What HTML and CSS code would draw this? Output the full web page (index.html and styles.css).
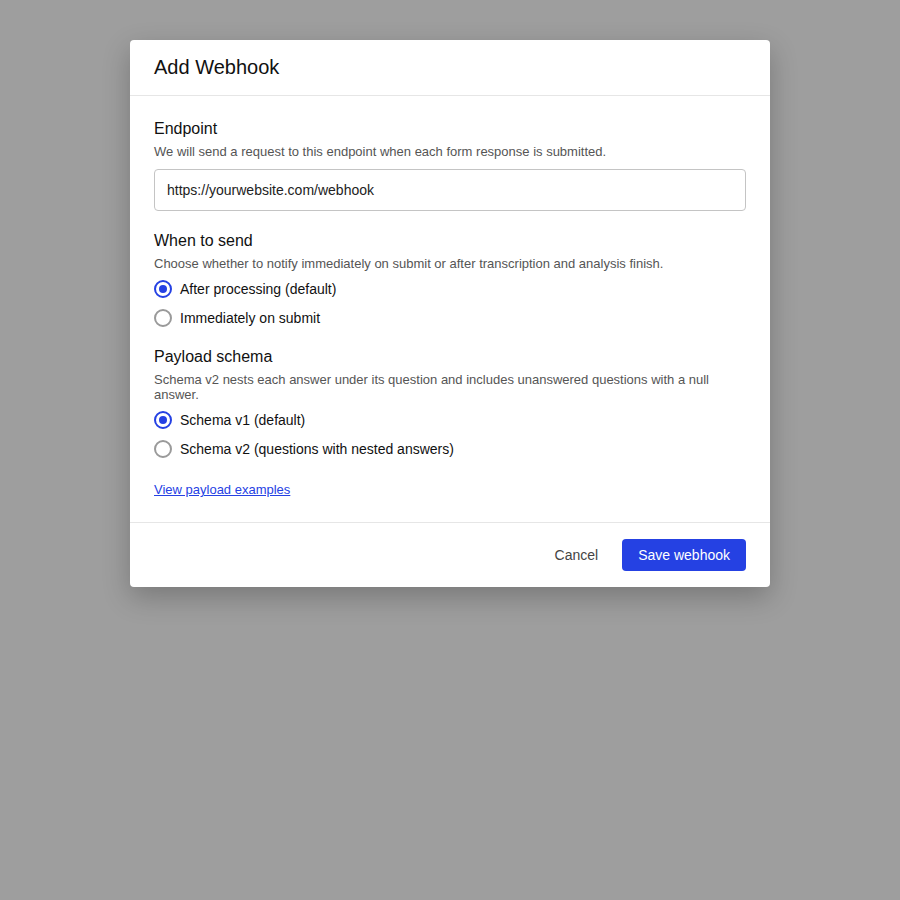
FILE: index.html
```html
<!DOCTYPE html>
<html lang="en">
<head>
    <meta charset="UTF-8">
    <meta name="viewport" content="width=device-width, initial-scale=1.0">
    <title>Add Webhook</title>
    <link rel="stylesheet" href="styles.css">
</head>
<body>
    <!-- Modal -->
    <div class="modal">
        <div class="modal-header">
            <h2>Add Webhook</h2>
        </div>

        <div class="modal-body">
            <div class="field field-endpoint">
                <div class="field-label">Endpoint</div>
                <div class="field-desc">We will send a request to this endpoint when each form response is submitted.</div>
                <input class="text-input" type="text" value="https://yourwebsite.com/webhook">
            </div>

            <div class="field">
                <div class="field-label">When to send</div>
                <div class="field-desc">Choose whether to notify immediately on submit or after transcription and analysis finish.</div>
                <div class="radio-list">
                    <label class="radio-row"><input type="radio" name="when" checked> After processing (default)</label>
                    <label class="radio-row"><input type="radio" name="when"> Immediately on submit</label>
                </div>
            </div>

            <div class="field">
                <div class="field-label">Payload schema</div>
                <div class="field-desc">Schema v2 nests each answer under its question and includes unanswered questions with a null answer.</div>
                <div class="radio-list">
                    <label class="radio-row"><input type="radio" name="schema" checked> Schema v1 (default)</label>
                    <label class="radio-row"><input type="radio" name="schema"> Schema v2 (questions with nested answers)</label>
                </div>
            </div>

            <a class="examples-link" href="#">View payload examples</a>
        </div>

        <div class="modal-footer">
            <button class="btn-cancel">Cancel</button>
            <button class="btn-save">Save webhook</button>
        </div>
    </div>
</body>
</html>
```

FILE: styles.css
```css
/* Reset */
* {
    margin: 0;
    padding: 0;
    box-sizing: border-box;
}

body {
    background-color: #9e9e9e;
    font-family: "Liberation Sans", Arial, sans-serif;
    color: #111;
    padding-top: 40px;
    height: 100vh;
}

/* Modal */
.modal {
    width: 640px;
    margin: 0 auto;
    background: #fff;
    border-radius: 4px;
    box-shadow: 0 10px 28px rgba(0, 0, 0, 0.24);
}

.modal-header {
    padding: 15px 24px 16px;
    border-bottom: 1px solid #e6e6e6;
}

.modal-header h2 {
    font-size: 20px;
    font-weight: 400;
    line-height: 24px;
    color: #111;
}

.modal-body {
    padding: 23px 24px 24px;
}

.field {
    margin-bottom: 18px;
}

.field-endpoint {
    margin-bottom: 20px;
}

.field-label {
    font-size: 16px;
    line-height: 20px;
    color: #111;
}

.field-desc {
    margin-top: 5px;
    font-size: 13px;
    line-height: 15px;
    color: #555;
}

.text-input {
    display: block;
    width: 100%;
    height: 42px;
    margin-top: 10px;
    padding: 0 12px;
    border: 1px solid #c4c4c4;
    border-radius: 4px;
    font-family: inherit;
    font-size: 14px;
    color: #222;
    outline: none;
}

/* Radio buttons */
.radio-list {
    margin-top: 7px;
    display: flex;
    flex-direction: column;
    gap: 7px;
}

.radio-row {
    display: flex;
    align-items: center;
    gap: 8px;
    height: 22px;
    font-size: 14px;
    color: #111;
    cursor: pointer;
}

.radio-row input {
    appearance: none;
    -webkit-appearance: none;
    width: 18px;
    height: 18px;
    border: 2px solid #9a9a9a;
    border-radius: 50%;
    display: grid;
    place-items: center;
    flex-shrink: 0;
}

.radio-row input:checked {
    border-color: #2541e3;
}

.radio-row input:checked::after {
    content: "";
    width: 8px;
    height: 8px;
    border-radius: 50%;
    background: #2541e3;
}

.examples-link {
    display: inline-block;
    margin-top: 4px;
    font-size: 13px;
    color: #2541e3;
    text-decoration: underline;
}

/* Footer */
.modal-footer {
    display: flex;
    justify-content: flex-end;
    align-items: center;
    gap: 8px;
    padding: 16px 24px;
    border-top: 1px solid #e6e6e6;
}

.modal-footer button {
    font-family: inherit;
    font-size: 14px;
    height: 32px;
    border: none;
    border-radius: 4px;
    cursor: pointer;
}

.btn-cancel {
    background: none;
    color: #444;
    padding: 0 16px;
}

.btn-save {
    background-color: #2541e3;
    color: #fff;
    padding: 0 16px;
}
```
